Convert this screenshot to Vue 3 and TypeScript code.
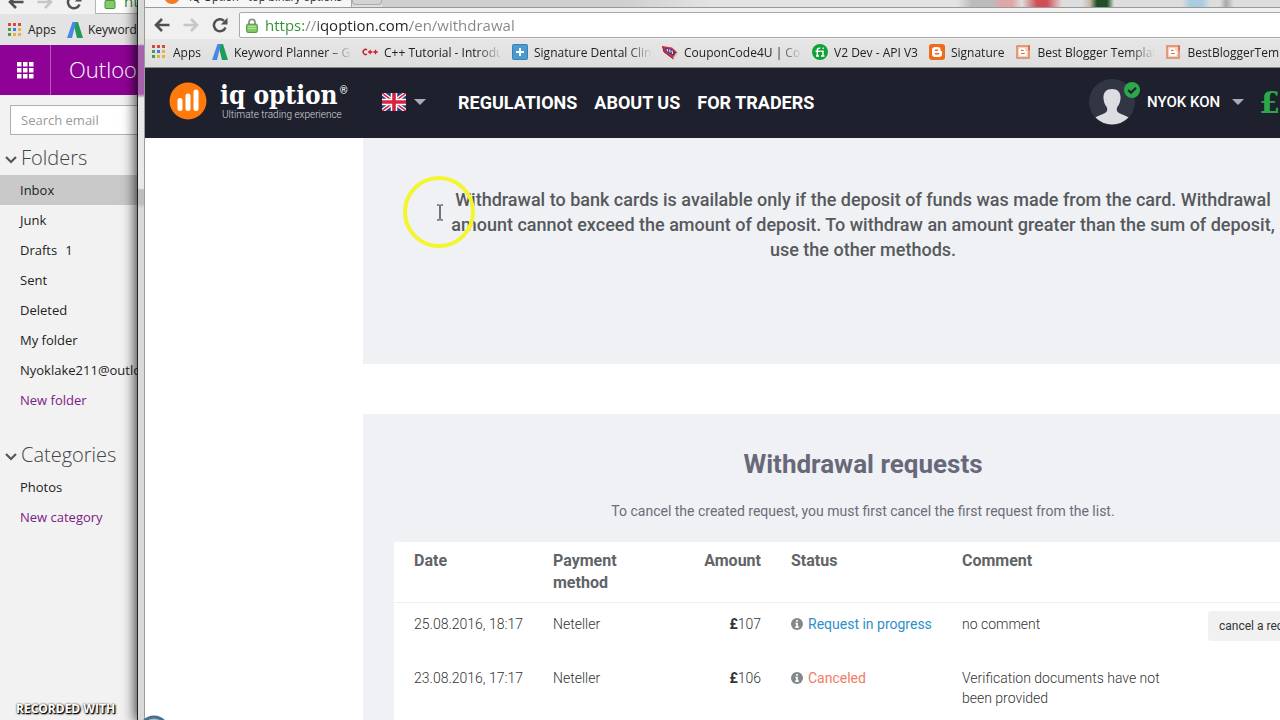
<script setup lang="ts">
import { ref } from 'vue'

interface Bookmark {
  icon: string
  label: string
}
interface WithdrawalRequest {
  date: string
  method: string
  amount: string
  status: string
  tone: 'progress' | 'canceled'
  comment: string
  cancelable: boolean
}

const address = ref('https://iqoption.com/en/withdrawal')
const mailAddress = ref('https://outlook.live.com')
const search = ref('')

const bookmarks: Bookmark[] = [
  { icon: 'apps', label: 'Apps' },
  { icon: 'adwords', label: 'Keyword Planner – Google' },
  { icon: 'cpp', label: 'C++ Tutorial - Introduction' },
  { icon: 'plus', label: 'Signature Dental Clinic' },
  { icon: 'coupon', label: 'CouponCode4U | Coupons' },
  { icon: 'fi', label: 'V2 Dev - API V3' },
  { icon: 'blogger', label: 'Signature' },
  { icon: 'template', label: 'Best Blogger Templates' },
  { icon: 'template', label: 'BestBloggerTemplates' },
]

const folders = [
  { name: 'Inbox', count: '' },
  { name: 'Junk', count: '' },
  { name: 'Drafts', count: '1' },
  { name: 'Sent', count: '' },
  { name: 'Deleted', count: '' },
  { name: 'My folder', count: '' },
  { name: 'Nyoklake211@outlook', count: '' },
]

const appDots = ['#d8483b', '#d8483b', '#d8483b', '#4a9c4c', '#3f7fd8', '#e3b33b', '#4a9c4c', '#e3b33b', '#e3b33b']
const siteNav = ['REGULATIONS', 'ABOUT US', 'FOR TRADERS']

const requests: WithdrawalRequest[] = [
  { date: '25.08.2016, 18:17', method: 'Neteller', amount: '107', status: 'Request in progress', tone: 'progress', comment: 'no comment', cancelable: true },
  { date: '23.08.2016, 17:17', method: 'Neteller', amount: '106', status: 'Canceled', tone: 'canceled', comment: 'Verification documents have not been provided', cancelable: false },
]
</script>

<template>
  <div class="desktop">
    <section class="mail" aria-label="Mail window">
      <div class="mail-toolbar">
        <button class="tool" aria-label="Back"><svg viewBox="0 0 16 16"><path d="M15.500 8H3M8 2L2 8l6 6" fill="none" stroke="#505050" stroke-width="2.600" /></svg></button>
        <button class="tool" aria-label="Forward"><svg viewBox="0 0 16 16"><path d="M.5 8H13M8 2l6 6-6 6" fill="none" stroke="#c6c6c6" stroke-width="2.600" /></svg></button>
        <button class="tool" aria-label="Reload"><svg viewBox="0 0 16 16"><path d="M13.500 10.500A6 6 0 1 1 12 3.800" fill="none" stroke="#505050" stroke-width="2.500" /><path d="M15.500.8v6.700H8.800z" fill="#505050" /></svg></button>
        <label class="mail-omnibox">
          <svg class="lock" viewBox="0 0 12 15"><path d="M3 7V4.500a3 3 0 0 1 6 0V7" fill="none" stroke="#8a8f8a" stroke-width="1.800" /><rect x="1" y="6.500" width="10" height="8" rx="1" fill="#82cc66" stroke="#4f9140" /></svg>
          <input v-model="mailAddress" aria-label="Mail address" />
        </label>
      </div>
      <nav class="mail-bookmarks" aria-label="Mail bookmarks">
        <a href="#"><svg class="mark" viewBox="0 0 16 16"><rect v-for="(c, i) in appDots" :key="i" :x="1 + (i % 3) * 5" :y="1 + Math.floor(i / 3) * 5" width="3" height="3" :fill="c" /></svg><span>Apps</span></a>
        <a href="#"><svg class="mark" viewBox="0 0 16 16"><path d="M6 0h5l5 16h-6z" fill="#1f9d58" /><path d="M5.500 0H9L5 16H0z" fill="#4a86e8" /></svg><span>Keyword Planner</span></a>
      </nav>
      <header class="mail-header">
        <button class="launcher" aria-label="App launcher"><svg viewBox="0 0 17 17"><rect v-for="i in 9" :key="i" :x="((i - 1) % 3) * 6" :y="Math.floor((i - 1) / 3) * 6" width="4.500" height="4.500" fill="#fff" /></svg></button>
        <span class="mail-brand">Outlook</span>
      </header>
      <div class="mail-side">
        <input v-model="search" class="mail-search" type="search" placeholder="Search email" aria-label="Search email" />
        <h2 class="side-title"><svg viewBox="0 0 12 8"><path d="M1 1l5 5 5-5" fill="none" stroke="#555" stroke-width="2.200" /></svg>Folders</h2>
        <ul class="side-list">
          <li v-for="(f, i) in folders" :key="f.name" :class="{ active: i === 0 }">
            <a href="#">{{ f.name }}<span v-if="f.count" class="count">{{ f.count }}</span></a>
          </li>
          <li class="create"><a href="#">New folder</a></li>
        </ul>
        <h2 class="side-title second"><svg viewBox="0 0 12 8"><path d="M1 1l5 5 5-5" fill="none" stroke="#555" stroke-width="2.200" /></svg>Categories</h2>
        <ul class="side-list">
          <li><a href="#">Photos</a></li>
          <li class="create"><a href="#">New category</a></li>
        </ul>
      </div>
    </section>

    <section class="browser" aria-label="Browser window">
      <div class="frame-edge"></div>
      <div class="window">
        <div class="tabs">
          <div class="tab">
            <svg class="tab-icon" viewBox="0 0 16 16"><circle cx="8" cy="8" r="8" fill="#f47b20" /></svg>
            <span>IQ Option - top binary options</span>
          </div>
          <div class="new-tab"></div>
          <div class="glass"></div>
        </div>
        <div class="toolbar">
          <button class="tool" aria-label="Back"><svg viewBox="0 0 16 16"><path d="M15.500 8H3M8 2L2 8l6 6" fill="none" stroke="#505050" stroke-width="2.600" /></svg></button>
          <button class="tool" aria-label="Forward"><svg viewBox="0 0 16 16"><path d="M.5 8H13M8 2l6 6-6 6" fill="none" stroke="#c6c6c6" stroke-width="2.600" /></svg></button>
          <button class="tool" aria-label="Reload"><svg viewBox="0 0 16 16"><path d="M13.500 10.500A6 6 0 1 1 12 3.800" fill="none" stroke="#505050" stroke-width="2.500" /><path d="M15.500.8v6.700H8.800z" fill="#505050" /></svg></button>
          <label class="omnibox">
            <svg class="lock" viewBox="0 0 12 15"><path d="M3 7V4.300a3 3 0 0 1 6 0V7" fill="none" stroke="#8c928c" stroke-width="1.800" /><rect x=".7" y="6.200" width="10.600" height="8.200" rx="1" fill="#82cc66" stroke="#4f9140" /><path d="M2 8.500h8M2 10.500h8" stroke="#b2e39e" stroke-width="1" /></svg>
            <input v-model="address" aria-label="Address" spellcheck="false" />
          </label>
        </div>
        <nav class="bookmarks" aria-label="Bookmarks">
          <a v-for="(b, i) in bookmarks" :key="i" href="#">
            <svg class="mark" viewBox="0 0 16 16" aria-hidden="true">
              <template v-if="b.icon === 'apps'">
                <rect v-for="(c, n) in appDots" :key="n" :x="1 + (n % 3) * 5" :y="1 + Math.floor(n / 3) * 5" width="3" height="3" :fill="c" />
              </template>
              <template v-else-if="b.icon === 'adwords'">
                <path d="M6 0h5l5 16h-6z" fill="#1f9d58" /><path d="M5.500 0H9L5 16H0z" fill="#4a86e8" />
              </template>
              <template v-else-if="b.icon === 'cpp'">
                <path d="M5 5.800A2.400 2.600 0 1 0 5 10" fill="none" stroke="#c8202a" stroke-width="1.500" /><path d="M6 8h4.500M8.200 5.800v4.400M11.300 8h4.500M13.500 5.800v4.400" stroke="#c8202a" stroke-width="1.300" />
              </template>
              <template v-else-if="b.icon === 'plus'">
                <rect x=".5" y=".5" width="15" height="15" rx="1" fill="#4b9ad2" stroke="#3a80b5" /><path d="M8 4v8M4 8h8" stroke="#fff" stroke-width="2" />
              </template>
              <template v-else-if="b.icon === 'coupon'">
                <path d="M.5 2L10 3.500l5.500 5-4 6.500L2 8z" fill="#cf3540" /><path d="M.5 2L2 8l9.500 7" fill="none" stroke="#8c1c28" /><path d="M3 4l7 1.200 3.500 3.300-2 3L4 7.500z" fill="#3d348c" /><path d="M5 5l.8 2.500M7.500 5.500l.8 3M10 6.500l.6 3.300" stroke="#e9e3f4" stroke-width="1.200" /><path d="M11.500 14.500l3.500-5.500" stroke="#e9c3a0" stroke-width="1.500" />
              </template>
              <template v-else-if="b.icon === 'fi'">
                <circle cx="8" cy="8" r="8" fill="#0fa336" /><path d="M5.300 12V6.300q0-2 2-2h1M3.500 7.200H8M4 12h3M8.500 7.200H11V12M9 12h3.500M10.500 4.200h1.300" fill="none" stroke="#fff" stroke-width="1.500" />
              </template>
              <template v-else-if="b.icon === 'blogger'">
                <rect width="16" height="16" rx="3" fill="#ee6a1c" /><path d="M6.500 3h2.200A2.800 2.800 0 0 1 11.500 6c0 .8.400 1 1 1 .4 0 .6.300.6.700v2A3.300 3.300 0 0 1 9.800 13H6.300A3.300 3.300 0 0 1 3 9.700V6.300A3.400 3.400 0 0 1 6.500 3z" fill="#fff" /><path d="M6.300 6.200h2.200M6.300 9.800h3.500" stroke="#ee6a1c" stroke-width="1.400" stroke-linecap="round" />
              </template>
              <template v-else>
                <rect x="2" y="2" width="12" height="12" fill="#f5d2bd" stroke="#dc8560" stroke-width="1.500" /><path d="M6.500 4h1.700a2 2 0 0 1 2 2c0 .8.300 1 1 1 .5 0 .6.200.6.600v1.600A2.500 2.500 0 0 1 9.300 12H6.500A2.500 2.500 0 0 1 4 9.500v-3A2.500 2.500 0 0 1 6.500 4z" fill="#fff" /><path d="M6.400 6.400h1.700M6.400 9.500h3" stroke="#dc7045" stroke-width="1.200" stroke-linecap="round" /><path d="M14 1.500v5" stroke="#dc6f45" stroke-width="2" />
              </template>
            </svg>
            <span>{{ b.label }}</span>
          </a>
        </nav>

        <header class="site-header">
          <a class="brand" href="#">
            <svg class="brand-icon" viewBox="0 0 38 38"><circle cx="19" cy="19" r="18.500" fill="#ff7a0c" /><path d="M11 18.500v8M19 14v12.500M27 10v16.500" stroke="#fff" stroke-width="5" stroke-linecap="round" /></svg>
            <span class="brand-text">
              <span class="brand-name">iq option<sup>®</sup></span>
              <span class="brand-line">Ultimate trading experience</span>
            </span>
          </a>
          <button class="language" aria-label="Language">
            <svg class="flag" viewBox="0 0 24 18"><rect width="24" height="18" fill="#2c3c86" /><path d="M0 0l24 18M24 0L0 18" stroke="#fff" stroke-width="4" /><path d="M0 0l24 18M24 0L0 18" stroke="#d8233f" stroke-width="1.600" /><path d="M12 0v18M0 9h24" stroke="#fff" stroke-width="6.500" /><path d="M12 0v18M0 9h24" stroke="#d8233f" stroke-width="3.600" /></svg>
            <svg class="caret" viewBox="0 0 12 6"><path d="M0 0h12L6 6z" fill="#a9acb8" /></svg>
          </button>
          <nav class="site-nav" aria-label="Main">
            <a v-for="item in siteNav" :key="item" href="#">{{ item }}</a>
          </nav>
          <div class="account">
            <button class="user">
              <span class="avatar">
                <svg viewBox="0 0 46 46"><circle cx="23" cy="23" r="23" fill="#323543" /><path d="M23 10c-6 0-9 4-8.500 9.500.2 3.500 1.500 6.500 3.500 9 .6 2.500 0 4.500-2 5.500-3.500 1.700-7 2.500-9.500 4.500A23 23 0 0 0 39.500 38.500c-2.500-2-6-2.800-9.500-4.500-2-1-2.600-3-2-5.500 2-2.500 3.300-5.500 3.500-9C32 14 29 10 23 10z" fill="#dcdde3" /></svg>
                <svg class="verified" viewBox="0 0 16 16"><circle cx="8" cy="8" r="8" fill="#2ba84a" /><path d="M4.200 8l2.800 2.800 5-5" fill="none" stroke="#1e212d" stroke-width="2.200" /></svg>
              </span>
              <span>NYOK KON</span>
              <svg class="caret" viewBox="0 0 12 6"><path d="M0 0h12L6 6z" fill="#a9acb8" /></svg>
            </button>
            <span class="balance">£107</span>
          </div>
        </header>

        <main class="page">
          <section class="panel notice">
            <p>Withdrawal to bank cards is available only if the deposit of funds was made from the card. Withdrawal amount cannot exceed the amount of deposit. To withdraw an amount greater than the sum of deposit, use the other methods.</p>
          </section>
          <section class="panel requests">
            <h1>Withdrawal requests</h1>
            <p class="hint">To cancel the created request, you must first cancel the first request from the list.</p>
            <table>
              <colgroup>
                <col class="c-date" /><col class="c-method" /><col class="c-amount" /><col class="c-status" /><col class="c-comment" /><col />
              </colgroup>
              <thead>
                <tr>
                  <th scope="col">Date</th>
                  <th scope="col">Payment method</th>
                  <th scope="col" class="amount">Amount</th>
                  <th scope="col">Status</th>
                  <th scope="col">Comment</th>
                  <td></td>
                </tr>
              </thead>
              <tbody>
                <tr v-for="r in requests" :key="r.date">
                  <td>{{ r.date }}</td>
                  <td>{{ r.method }}</td>
                  <td class="amount"><b>£</b>{{ r.amount }}</td>
                  <td>
                    <span class="status" :class="r.tone">
                      <svg viewBox="0 0 12 12"><circle cx="6" cy="6" r="6" fill="#83888c" /><path d="M6 2v1.800M4.500 5.500H6V9M4.300 9.200h3.400" fill="none" stroke="#fff" stroke-width="1.700" /></svg>{{ r.status }}
                    </span>
                  </td>
                  <td>{{ r.comment }}</td>
                  <td class="action"><button v-if="r.cancelable">cancel a request</button></td>
                </tr>
              </tbody>
            </table>
          </section>
        </main>
      </div>
    </section>

    <svg class="orb" viewBox="0 0 32 32" aria-hidden="true"><circle cx="16" cy="16" r="14" fill="#a9bccb" stroke="#48708f" stroke-width="3" /></svg>
    <span class="watermark">RECORDED WITH</span>
    <svg class="pointer" viewBox="0 0 72 72" aria-hidden="true"><circle cx="36" cy="36" r="34" fill="none" stroke="#f3f52e" stroke-width="4" /><path d="M34 29h2.500M37.500 29H40M37 29.500v14M34 44h2.500M37.500 44H40" fill="none" stroke="#222" stroke-width="1.200" /></svg>
  </div>
</template>

<style>
body {
  overflow: hidden;
}
</style>

<style scoped>
* {
  box-sizing: border-box;
}
a {
  color: inherit;
  text-decoration: none;
}
button,
input {
  font: inherit;
  color: inherit;
  border: 0;
  padding: 0;
  margin: 0;
  background: none;
}
svg {
  display: block;
  flex: none;
}
.desktop {
  position: relative;
  height: 100vh;
  overflow: hidden;
  font-family: 'Open Sans', 'Noto Sans', sans-serif;
  color: #222;
}

/* mail window */
.mail {
  height: 100%;
  background: #f2f2f2;
}
.mail-toolbar {
  display: flex;
  align-items: flex-end;
  height: 14px;
  padding-left: 8px;
  gap: 13px;
  overflow: hidden;
  background: #f1f1f1;
}
.mail-toolbar .tool {
  margin-bottom: 4px;
}
.mail-omnibox {
  display: flex;
  align-items: center;
  gap: 8px;
  height: 26px;
  flex: 1;
  padding-left: 8px;
  border: 1px solid #b5b5b5;
  background: #fff;
  font-size: 15px;
  color: #2f8a2f;
}
.mail-bookmarks {
  display: flex;
  align-items: center;
  gap: 11px;
  height: 31px;
  padding-left: 7px;
  background: #e3e3e3;
  font-size: 12px;
}
.mail-bookmarks a {
  display: flex;
  align-items: center;
  gap: 5px;
}
.mail-header {
  display: flex;
  align-items: center;
  height: 50px;
  background: #8e0396;
  color: #fff;
}
.launcher {
  display: flex;
  align-items: center;
  justify-content: center;
  width: 51px;
  height: 50px;
  border-right: 1px solid #b45cb9;
}
.launcher svg {
  width: 17px;
}
.mail-brand {
  padding-bottom: 2px;
  padding-left: 18px;
  font-size: 22px;
  font-weight: 300;
}
.mail-side {
  width: 220px;
  padding-top: 10px;
  font-size: 13px;
}
.mail-search {
  display: block;
  width: 200px;
  height: 30px;
  margin: 0 10px 6px;
  padding: 0 10px;
  border: 1px solid #b0b0b0;
  background: #fff;
  outline: 0;
}
.mail-search::placeholder {
  color: #999;
}
.side-title {
  display: flex;
  align-items: center;
  gap: 4px;
  height: 34px;
  margin: 0;
  padding-bottom: 2px;
  padding-left: 5px;
  font-size: 20px;
  font-weight: 300;
  color: #444;
}
.side-title svg {
  width: 12px;
  margin-top: 6px;
}
.side-title.second {
  margin-top: 23px;
}
.side-list {
  margin: 0;
  padding: 0;
  list-style: none;
}
.side-list a {
  display: block;
  padding-left: 20px;
  line-height: 30px;
}
.active {
  background: #c9c9c9;
}
.create {
  color: #7b1a85;
}
.count {
  margin-left: 8px;
}

/* front window */
.browser {
  position: absolute;
  top: 0;
  bottom: 0;
  left: 137px;
  right: -301px;
  display: flex;
  box-shadow: 0 0 12px 2px rgba(0, 0, 0, 0.75);
}
.frame-edge {
  width: 8px;
  border-left: 1px solid #222;
  border-right: 1px solid #9b9b9b;
  background: linear-gradient(#d5d8d4 0 44px, #a85fad 46px 94px, #e9e9e9 98px 188px, #bdbdbd 190px 204px, #d9d9d9 208px);
}
.window {
  flex: 1;
  min-width: 0;
  overflow: hidden;
  background: #fff;
}
.tabs {
  display: flex;
  height: 7px;
  background: #dedede;
}
.tab {
  display: flex;
  align-items: flex-end;
  gap: 9px;
  width: 207px;
  padding-left: 19px;
  overflow: hidden;
  border-right: 1px solid #a5a5a5;
  background: #f6f6f6;
  font-size: 11px;
  line-height: 12px;
  white-space: nowrap;
}
.tab span {
  margin-bottom: 4px;
}
.tab-icon {
  width: 16px;
  margin-bottom: 3px;
}
.new-tab {
  width: 30px;
  height: 5px;
  border: 1px solid #aaa;
  border-top: 0;
  border-radius: 0 0 4px 4px;
  background: #d3d3d3;
}
.glass {
  flex: 1;
  background: linear-gradient(90deg, #cfcfcf 0 240px, #e3e3e3 330px 575px, #bbb 590px 610px, #e0a5a8 620px 630px, #dedede 640px, #cf4f55 655px 665px, #ddd 680px 700px, #c8b8a8 708px, #1f4f22 715px 725px, #ddd 732px 800px, #a9cde0 808px 820px, #ddd 828px 838px, #aaa 844px, #ddd 852px);
}
.toolbar {
  display: flex;
  align-items: center;
  gap: 13px;
  height: 32px;
  padding-bottom: 2px;
  padding-left: 9px;
  border-top: 1px solid #999;
  background: #f0f0f0;
}
.toolbar .tool {
  margin-top: 5px;
}
.tool svg {
  width: 16px;
}
.omnibox {
  display: flex;
  align-items: center;
  gap: 7px;
  flex: 1;
  height: 26px;
  margin-top: 5px;
  margin-left: -2px;
  padding-left: 6px;
  border: 1px solid #a9a9a9;
  border-radius: 2px;
  background: #fff;
}
.lock {
  width: 12px;
  height: 15px;
}
.omnibox input {
  flex: 1;
  font-size: 15px;
  outline: 0;
  color: transparent;
  background: linear-gradient(90deg, #2f8f2f 0 39px, #8a8a8a 39px 53px, #222 53px 145px, #858585 145px);
  background-clip: text;
  caret-color: #222;
}
.bookmarks {
  display: flex;
  align-items: center;
  gap: 11px;
  height: 29px;
  padding-bottom: 2px;
  padding-left: 6px;
  border-bottom: 1px solid #888;
  background: linear-gradient(#e6e6e6, #dedede);
  font-size: 12px;
}
.bookmarks a {
  display: flex;
  align-items: center;
  gap: 6px;
  flex: none;
}
.mark {
  width: 16px;
}
.bookmarks span {
  max-width: 117px;
  overflow: hidden;
  white-space: nowrap;
  mask-image: linear-gradient(90deg, #000 0 94px, transparent 118px);
}

/* trading site */
.site-header {
  display: flex;
  align-items: center;
  height: 70px;
  padding-bottom: 2px;
  padding-left: 24px;
  background: #1e212d;
  color: #fff;
  font-family: Roboto, sans-serif;
}
.brand {
  display: flex;
  align-items: center;
  gap: 13px;
  width: 213px;
  margin-top: -2px;
}
.brand-icon {
  width: 38px;
}
.brand-text {
  display: flex;
  flex-direction: column;
}
.brand-name {
  font-family: 'DejaVu Serif Condensed', 'DejaVu Serif', serif;
  font-size: 26px;
  font-weight: 700;
  line-height: 28px;
  white-space: nowrap;
}
.brand-name sup {
  font: 10px/10px Roboto, sans-serif;
  vertical-align: 10px;
  margin-left: 2px;
}
.brand-line {
  padding-left: 2px;
  font-size: 10px;
  font-weight: 300;
  line-height: 12px;
  color: #d5d7de;
}
.language {
  display: flex;
  align-items: center;
  gap: 8px;
}
.flag {
  width: 24px;
}
.caret {
  width: 12px;
}
.site-nav {
  display: flex;
  gap: 17px;
  margin-left: 32px;
  font-size: 18px;
  font-weight: 700;
}
.account {
  display: flex;
  align-items: center;
  gap: 15px;
  margin-left: auto;
  width: 492px;
}
.user {
  display: flex;
  align-items: center;
  gap: 12px;
  font-size: 15px;
  font-weight: 500;
}
.avatar {
  position: relative;
  width: 46px;
}
.verified {
  position: absolute;
  top: 3px;
  right: -5px;
  width: 16px;
}
.balance {
  font-family: 'DejaVu Serif', serif;
  font-size: 30px;
  font-weight: 700;
  color: #2ba84a;
}
.page {
  display: flex;
  flex-direction: column;
  align-items: center;
  gap: 50px;
  font-family: Roboto, sans-serif;
}
.panel {
  width: 1000px;
  max-width: 100%;
  background: #f0f1f5;
  text-align: center;
}
.notice {
  padding: 49px 80px 102px;
}
.notice p {
  margin: 0;
  font-size: 18px;
  font-weight: 500;
  line-height: 25px;
  color: #56595c;
}
.requests {
  padding: 35px 31px 100px;
}
h1 {
  margin: 0;
  font-size: 26px;
  font-weight: 700;
  line-height: 30px;
  color: #676879;
}
.hint {
  margin: 22px 0 21px;
  font-size: 14px;
  line-height: 20px;
  color: #6b6d78;
}
table {
  width: 100%;
  table-layout: fixed;
  border-collapse: collapse;
  background: #fff;
  text-align: left;
}
.c-date { width: 144px; }
.c-method { width: 120px; }
.c-amount { width: 118px; }
.c-status { width: 171px; }
.c-comment { width: 246px; }
th {
  padding: 8px 15px;
  font-size: 16px;
  font-weight: 700;
  line-height: 22px;
  vertical-align: top;
  color: #606467;
}
thead tr {
  border-bottom: 1px solid #f0f0f2;
}
tbody td {
  padding: 11px 15px 23px;
  font-size: 14px;
  font-weight: 300;
  line-height: 20px;
  vertical-align: top;
  color: #333;
}
th:first-child,
td:first-child {
  padding-left: 20px;
  padding-right: 0;
}
.amount {
  text-align: right;
}
.amount b {
  font-weight: 700;
}
.status {
  display: flex;
  align-items: center;
  gap: 5px;
  white-space: nowrap;
  font-weight: 400;
}
.status svg {
  width: 12px;
}
.progress {
  color: #2e8fc9;
}
.canceled {
  color: #ee7c66;
}
tbody .action {
  padding: 8px 0 0 15px;
}
.action button {
  height: 30px;
  padding: 0 11px;
  border-radius: 3px;
  background: #f1f1f1;
  font-size: 12px;
  font-weight: 400;
}

/* recorder overlays */
.orb {
  position: absolute;
  left: 138px;
  bottom: -27px;
  width: 32px;
}
.watermark {
  position: absolute;
  left: 16px;
  bottom: 2px;
  font-size: 12px;
  line-height: 18px;
  font-weight: 700;
  color: #fff;
  text-shadow: 1px 1px 1px #000, 0 0 2px #333, 1px 1px 2px #222;
}
.pointer {
  position: absolute;
  left: 403px;
  top: 176px;
  width: 72px;
}
</style>
